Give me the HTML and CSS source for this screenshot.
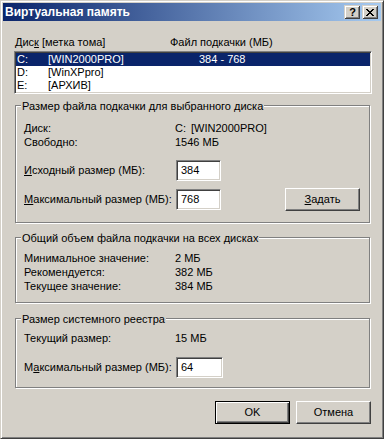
FILE: index.html
```html
<!DOCTYPE html>
<html lang="ru">
<head>
<meta charset="utf-8">
<title>Виртуальная память</title>
<link rel="stylesheet" href="styles.css">
</head>
<body>
<div class="window">
  <div class="titlebar">
    <span class="title">Виртуальная память</span>
    <div class="tbtns">
      <span class="tbtn help">?</span>
      <span class="tbtn close"><svg width="8" height="7" viewBox="0 0 8 7" shape-rendering="crispEdges"><path d="M0 0h2v1H0zM6 0h2v1H6zM1 1h2v1H1zM5 1h2v1H5zM2 2h4v1H2zM3 3h2v1H3zM2 4h4v1H2zM1 5h2v1H1zM5 5h2v1H5zM0 6h2v1H0zM6 6h2v1H6z" fill="#000"/></svg></span>
    </div>
  </div>
  <div class="body">
    <div class="colheads"><span class="c1">Дис<u>к</u> [метка тома]</span><span>Файл подкачки (МБ)</span></div>
    <div class="listbox">
      <div class="row sel"><span class="d">C:</span><span class="l">[WIN2000PRO]</span><span>384 - 768</span></div>
      <div class="row"><span class="d">D:</span><span class="l">[WinXPpro]</span><span></span></div>
      <div class="row"><span class="d">E:</span><span class="l">[АРХИВ]</span><span></span></div>
    </div>

    <div class="group g1">
      <span class="legend">Размер файла подкачки для выбранного диска</span>
      <div class="kv"><span class="k">Диск:</span><span><span class="drv">C:</span>[WIN2000PRO]</span></div>
      <div class="kv"><span class="k">Свободно:</span><span>1546 МБ</span></div>
      <div class="editrow first"><span class="ek"><u>И</u>сходный размер (МБ):</span><span class="edit">384</span></div>
      <div class="editrow second"><span class="ek"><u>М</u>аксимальный размер (МБ):</span><span class="edit">768</span><span class="btn set"><u>З</u>адать</span></div>
    </div>

    <div class="group g2">
      <span class="legend">Общий объем файла подкачки на всех дисках</span>
      <div class="kv"><span class="k">Минимальное значение:</span><span>2 МБ</span></div>
      <div class="kv"><span class="k">Рекомендуется:</span><span>382 МБ</span></div>
      <div class="kv"><span class="k">Текущее значение:</span><span>384 МБ</span></div>
    </div>

    <div class="group g3">
      <span class="legend">Размер системного реестра</span>
      <div class="kv"><span class="k">Текущий размер:</span><span>15 МБ</span></div>
      <div class="editrow third"><span class="ek">М<u>а</u>ксимальный размер (МБ):</span><span class="edit wide">64</span></div>
    </div>

    <div class="buttons">
      <span class="btn default">OK</span>
      <span class="btn">Отмена</span>
    </div>
  </div>
</div>
</body>
</html>
```

FILE: styles.css
```css
html, body {
  margin: 0;
  padding: 0;
  background: #D4D0C8;
}

.window {
  width: 384px;
  height: 439px;
  box-sizing: border-box;
  background: #D4D0C8;
  border: 1px solid;
  border-color: #D4D0C8 #404040 #404040 #D4D0C8;
  box-shadow: inset 1px 1px 0 #fff, inset -1px -1px 0 #808080;
  padding: 2px;
  display: flex;
  flex-direction: column;
  font-family: "Liberation Sans", Arial, sans-serif;
  font-size: 11px;
  color: #000;
  overflow: hidden;
}

.titlebar {
  height: 18px;
  flex: none;
  display: flex;
  align-items: center;
  background: linear-gradient(to right, #0A246A, #A6CAF0);
  padding-left: 2px;
}

.title {
  color: #fff;
  font-weight: bold;
  font-size: 12px;
  line-height: 18px;
}

.tbtns {
  margin-left: auto;
  display: flex;
  gap: 2px;
  padding-right: 3px;
}

.tbtn {
  width: 16px;
  height: 14px;
  box-sizing: border-box;
  background: #D4D0C8;
  box-shadow: inset 1px 1px 0 #D4D0C8, inset -1px -1px 0 #404040, inset 2px 2px 0 #fff, inset -2px -2px 0 #808080;
  display: flex;
  align-items: center;
  justify-content: center;
}

.help {
  font-weight: bold;
  font-size: 11px;
  line-height: 14px;
  color: #000;
  padding-left: 1px;
}

.close svg {
  display: block;
  margin-left: 0px;
}

.body {
  display: flex;
  flex-direction: column;
  line-height: 13px;
}

.colheads {
  margin-top: 15px;
  padding-left: 12px;
  display: flex;
  height: 13px;
}

.c1 {
  width: 155px;
}

.listbox {
  margin: 2px 0 0 11px;
  width: 358px;
  height: 43px;
  box-sizing: border-box;
  background: #fff;
  border: 1px solid;
  border-color: #808080 #fff #fff #808080;
  box-shadow: inset 1px 1px 0 #404040, inset -1px -1px 0 #D4D0C8;
  padding: 1px;
}

.row {
  display: flex;
  height: 13px;
  line-height: 13px;
  padding-left: 1px;
}

.row.sel {
  background: #0A246A;
  color: #fff;
}

.row .d {
  width: 31px;
}

.row .l {
  width: 151px;
}

.group {
  position: relative;
  margin-left: 12px;
  width: 355px;
  box-sizing: border-box;
  border: 1px solid #808080;
  box-shadow: inset 1px 1px 0 #fff, 1px 1px 0 #fff;
  padding-left: 8px;
  display: flex;
  flex-direction: column;
}

.legend {
  position: absolute;
  top: -6px;
  left: 5px;
  padding: 0 1px;
  background: #D4D0C8;
  line-height: 13px;
}

.g1 {
  margin-top: 11px;
  height: 118px;
  padding-top: 15px;
}

.g2 {
  margin-top: 14px;
  height: 66px;
  padding-top: 13px;
}

.g3 {
  margin-top: 15px;
  height: 70px;
  padding-top: 12px;
}

.kv {
  display: flex;
  height: 14px;
  line-height: 14px;
}

.kv .k {
  width: 151px;
}

.drv {
  display: inline-block;
  width: 16px;
}

.editrow {
  display: flex;
  align-items: center;
}

.editrow .ek {
  width: 152px;
}

.editrow.first {
  margin-top: 11px;
  height: 21px;
}

.editrow.second {
  margin-top: 7px;
  height: 23px;
}

.editrow.third {
  margin-top: 12px;
  height: 21px;
}

.edit {
  width: 45px;
  height: 21px;
  box-sizing: border-box;
  background: #fff;
  border: 1px solid;
  border-color: #808080 #fff #fff #808080;
  box-shadow: inset 1px 1px 0 #404040, inset -1px -1px 0 #D4D0C8;
  padding-left: 4px;
  line-height: 19px;
}

.edit.wide {
  width: 47px;
}

.btn {
  width: 75px;
  height: 23px;
  box-sizing: border-box;
  background: #D4D0C8;
  border: 1px solid;
  border-color: #fff #404040 #404040 #fff;
  box-shadow: inset -1px -1px 0 #808080;
  display: flex;
  align-items: center;
  justify-content: center;
  line-height: 13px;
}

.btn.set {
  margin-left: 64px;
}

.btn.default {
  border: 1px solid #000;
  box-shadow: inset 1px 1px 0 #fff, inset -1px -1px 0 #404040, inset -2px -2px 0 #808080;
}

.buttons {
  margin-top: 13px;
  display: flex;
  justify-content: flex-end;
  gap: 6px;
  padding-right: 10px;
}
```
